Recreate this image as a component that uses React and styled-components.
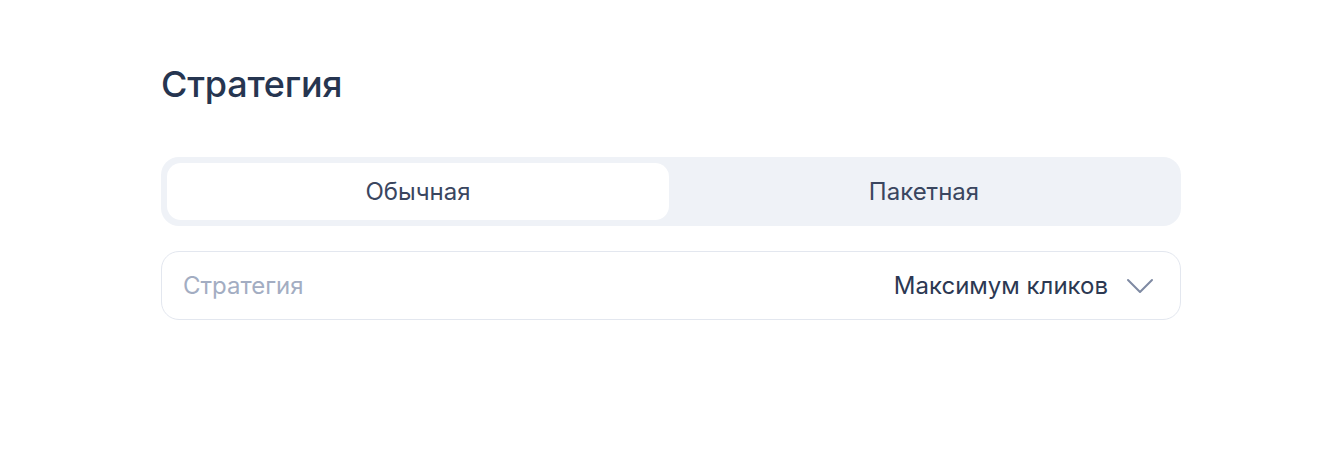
import React, { useState } from 'react';
import styled, { createGlobalStyle } from 'styled-components';

const GlobalStyle = createGlobalStyle`
  html, body {
    margin: 0;
    padding: 0;
    background: #ffffff;
    font-family: Inter, "Noto Sans", "Liberation Sans", sans-serif;
  }
`;

const Page = styled.div`
  width: 1340px;
  height: 450px;
  box-sizing: border-box;
  padding: 61px 159px 0 161px;
`;

const Title = styled.h2`
  margin: 0 0 50px;
  font-size: 36px;
  line-height: 46px;
  font-weight: 500;
  color: #263550;
  letter-spacing: -0.2px;
`;

const Segmented = styled.div`
  display: grid;
  grid-template-columns: 1fr 1fr;
  gap: 4px;
  padding: 6px;
  height: 69px;
  box-sizing: border-box;
  background: #eff2f7;
  border-radius: 18px;
  margin-bottom: 25px;
`;

const Tab = styled.button`
  border: none;
  border-radius: 14px;
  background: ${(p) => (p.$active ? '#ffffff' : 'transparent')};
  font-family: inherit;
  font-size: 24px;
  color: #3a465f;
  cursor: pointer;
  padding: 0;
`;

const Select = styled.div`
  display: flex;
  align-items: center;
  height: 69px;
  box-sizing: border-box;
  padding: 0 26px 0 21px;
  border: 1.5px solid #e3e7ef;
  border-radius: 18px;
  background: #ffffff;
`;

const Label = styled.span`
  flex: 1;
  font-size: 24px;
  color: #a3adc2;
`;

const Value = styled.span`
  font-size: 24px;
  color: #2c3852;
  margin-right: 18px;
`;

const Chevron = () => (
  <svg width="28" height="16" viewBox="0 0 28 16" fill="none">
    <path d="M2 2l12 12L26 2" stroke="#7f8aa3" strokeWidth="2" strokeLinecap="round" strokeLinejoin="round" />
  </svg>
);

export default function App() {
  const [mode, setMode] = useState('regular');
  return (
    <>
      <GlobalStyle />
      <Page>
        <Title>Стратегия</Title>
        <Segmented>
          <Tab $active={mode === 'regular'} onClick={() => setMode('regular')}>Обычная</Tab>
          <Tab $active={mode === 'package'} onClick={() => setMode('package')}>Пакетная</Tab>
        </Segmented>
        <Select>
          <Label>Стратегия</Label>
          <Value>Максимум кликов</Value>
          <Chevron />
        </Select>
      </Page>
    </>
  );
}
